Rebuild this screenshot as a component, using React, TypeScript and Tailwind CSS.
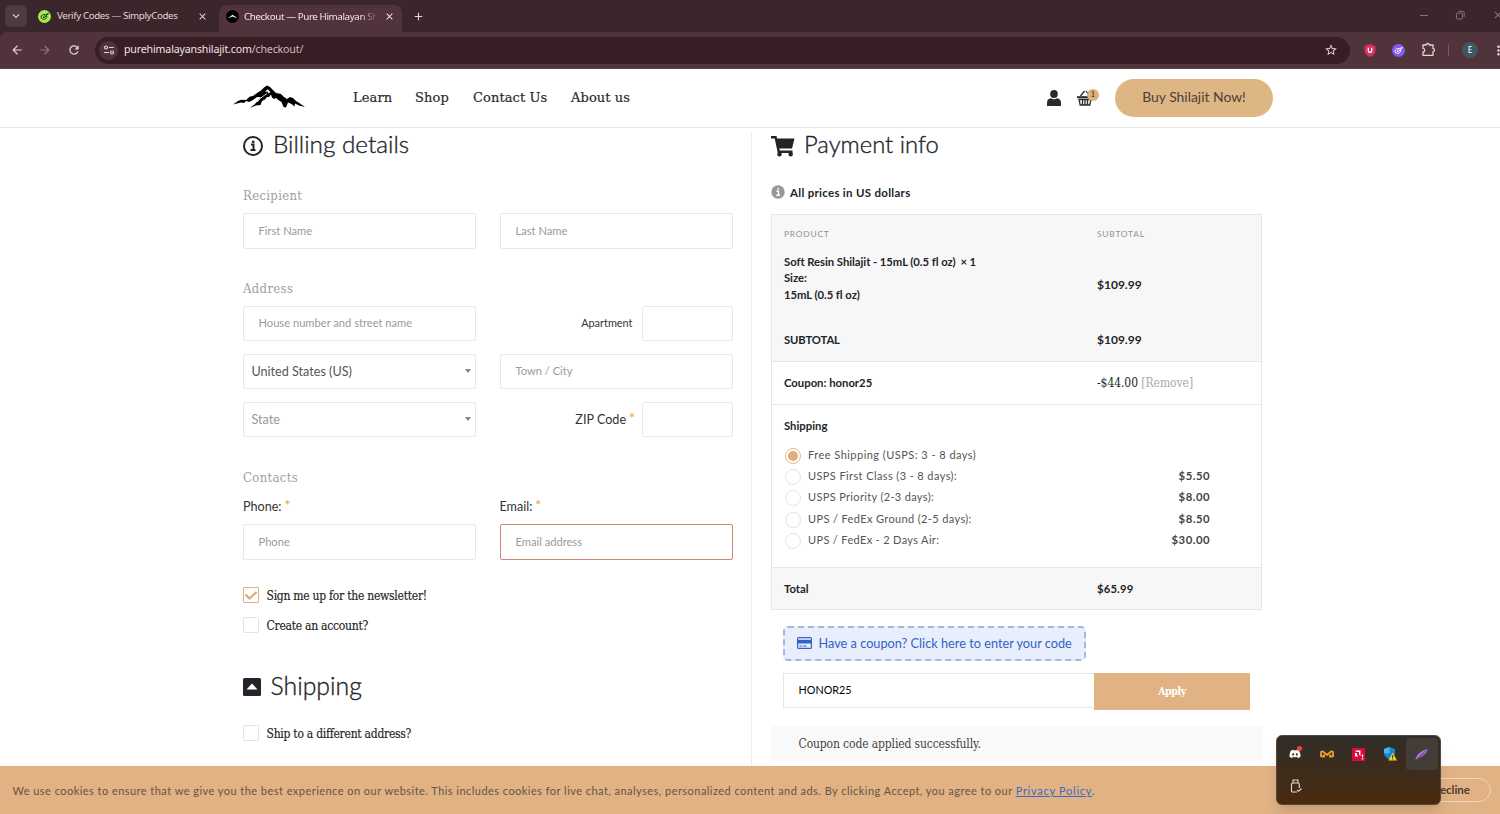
import React from 'react'
import clsx from 'clsx'
import { FaDiscord } from 'react-icons/fa'
import {
  MdArrowBack,
  MdArrowForward,
  MdClose,
  MdAdd,
  MdRefresh,
  MdStarBorder,
  MdKeyboardArrowDown,
  MdMoreVert
} from 'react-icons/md'

const shippingOptions = [
  { label: 'Free Shipping (USPS: 3 - 8 days)', price: '', spacing: 'tracking-[0.47px]' },
  { label: 'USPS First Class (3 - 8 days):', price: '$5.50', spacing: 'tracking-[0.4px]' },
  { label: 'USPS Priority (2-3 days):', price: '$8.00', spacing: 'tracking-[0.34px]' },
  { label: 'UPS / FedEx Ground (2-5 days):', price: '$8.50', spacing: 'tracking-[0.37px]' },
  { label: 'UPS / FedEx - 2 Days Air:', price: '$30.00', spacing: 'tracking-[0.34px]' }
]

const SimplyMark: React.FC<{ className?: string; bg: string; fg: string }> = ({ className, bg, fg }) => (
  <svg viewBox="0 0 14 14" className={className}>
    <circle cx="7" cy="7" r="7" fill={bg} />
    <path
      d="M7.5 4.8C5 4.4 3.2 5.800 3.200 7.600 3.200 9.600 5.500 10.500 7.500 9.800 9 9.200 9.600 8 9.400 6.800M5.700 8.100 6.800 8.200 11 4.300M6 7 8.500 4.800 11.200 3.700"
      fill="none"
      stroke={fg}
      strokeWidth="1"
      strokeLinecap="round"
    />
  </svg>
)

const BrowserChrome: React.FC = () => (
  <div className="h-[69px] shrink-0 bg-[#3a262b] font-['Noto_Sans',sans-serif] text-[#e6d3d6]">
    <div className="flex h-8 items-end">
      <div className="mb-[5px] ml-[5px] flex h-[22px] w-[22px] items-center justify-center rounded-md bg-[#4b3c40]">
        <MdKeyboardArrowDown size={14} />
      </div>
      <div className="ml-[10px] flex h-8 w-[182px] items-center pl-px">
        <SimplyMark className="h-[13px] w-[13px]" bg="#a4ec50" fg="#1c3310" />
        <span className="ml-[6px] whitespace-nowrap pt-px text-[9.8px] tracking-[-0.4px]">Verify Codes — SimplyCodes</span>
        <MdClose size={11} className="ml-auto mr-[11px]" />
      </div>
      <div className="flex h-[27px] w-[183px] items-center rounded-t-lg bg-[#51333c] pb-[4px] pl-[7px] text-[#f5e6e9]">
        <svg viewBox="0 0 13 13" className="h-[13px] w-[13px] shrink-0">
          <circle cx="6.5" cy="6.5" r="6.5" fill="#000" />
          <path d="M1.5 8 4 6.700 6.500 4.800 9 6.500 11.500 8 9 7.600 6.500 6.500 4 7.600z" fill="#fff" />
        </svg>
        <div className="ml-[5px] w-[134px] whitespace-nowrap pt-px text-[9.8px] tracking-[-0.4px] [mask-image:linear-gradient(to_right,black_86%,transparent_100%)]">
          Checkout — Pure Himalayan Sh
        </div>
        <MdClose size={11} className="ml-[6px] shrink-0" />
      </div>
      <MdAdd size={13} className="mb-[9px] ml-[10px]" />
      <div className="mb-[11px] ml-auto flex items-center text-[#8a7378]">
        <div className="mr-[27px] h-px w-2 bg-current" />
        <svg viewBox="0 0 10 10" className="mr-[27px] h-[10px] w-[10px]" fill="none" stroke="currentColor" strokeWidth="1">
          <rect x="1.5" y="3" width="6" height="6" rx="1.2" />
          <path d="M3.5 1.200h4a1.700 1.700 0 0 1 1.700 1.700v4" />
        </svg>
        <MdClose size={12} className="-mr-[4px]" />
      </div>
    </div>
    <div className="flex h-[37px] items-center rounded-tl-md border-b border-[#5b454b] bg-[#51333c]">
      <MdArrowBack size={14} className="ml-[10px]" />
      <MdArrowForward size={14} className="ml-[14px] text-[#8f757c]" />
      <MdRefresh size={14} className="ml-[15px]" />
      <div className="ml-[14px] flex h-[27px] w-[1255px] items-center rounded-full bg-[#371d24] pl-[4px] pr-[12px]">
        <div className="flex h-[19px] w-[19px] items-center justify-center rounded-full bg-[#51333c]">
          <svg viewBox="0 0 12 12" className="h-[12px] w-[12px]" fill="none" stroke="currentColor" strokeWidth="1.2">
            <circle cx="3" cy="3.5" r="1.5" />
            <path d="M6 3.500h5M1 8.500h5" />
            <circle cx="9" cy="8.5" r="1.5" />
          </svg>
        </div>
        <span className="ml-[6px] text-[10.6px] tracking-[-0.15px] text-[#f3e4e7]">
          purehimalayanshilajit.com<span className="text-[#d3bbc1]">/checkout/</span>
        </span>
        <MdStarBorder size={14} className="ml-auto" />
      </div>
      <svg viewBox="0 0 12 13" className="ml-[14px] h-[13px] w-[12px]">
        <path d="M6 0 11.500 2v4.500C11.500 9.500 9 12 6 13 3 12 .5 9.500.5 6.500V2z" fill="#d62f62" />
        <path d="M4.300 3.700v3.100a1.700 1.700 0 0 0 3.400 0V3.700" fill="none" stroke="#fff" strokeWidth="1.3" />
      </svg>
      <SimplyMark className="ml-[16px] h-[13px] w-[13px]" bg="#8359ee" fg="#fff" />
      <svg viewBox="0 0 15 15" className="-mt-[2px] ml-[16px] h-[15px] w-[15px]" fill="none" stroke="currentColor" strokeWidth="1.3">
        <path d="M2 3h3.200a1.500 1.500 0 0 1 3 0H12v3.600a1.500 1.500 0 0 1 0 3V13.300H2V10c2.300-.2 2.300-3.400 0-3.600z" strokeLinejoin="round" />
      </svg>
      <div className="ml-[12px] h-3 w-px bg-[#745860]" />
      <div className="ml-[13px] flex h-4 w-4 items-center justify-center rounded-full bg-[#415760] text-[8.5px] text-white">E</div>
      <MdMoreVert size={15} className="-mr-2 ml-[13px] shrink-0" />
    </div>
  </div>
)

const Mountain: React.FC = () => (
  <svg viewBox="0 0 72 24" className="h-[24px] w-[72px]" fill="#000">
    <path d="M0 19.500 5 16 8 14.700 13 15 17 11.500 20 11 24 8 28 5.500 31 2.500 34 .5 37 2 40 5 43 8 48 9 51 12 54 14 57 12 60 13 63 16 67 18.500 72 22 66 20.500 62 18.500 61.500 21.500 58.500 19 55 17.500 53 22.500 50.500 22 48.500 17 46 15.500 43 13 41 14 39 12.500 38 9.500 36 12 34 12 32 14.500 29 16 27.500 20 23 20.500 17 23 22 19 25 15.500 28 12 24 12 20 15 16 17 13 16 11 18 8 17.500z" />
    <path d="M32 7 34.500 4.200 37.500 7 35.500 8.500 34.500 6.500z" fill="#fff" />
    <path d="m24 17 5-5 5-3.500" stroke="#fff" strokeWidth=".8" fill="none" />
  </svg>
)

const SiteHeader: React.FC = () => (
  <header className="flex h-[59px] shrink-0 items-center border-b border-[#e8e8e8] pl-[233px] text-[#2b2b2b]">
    <div className="-mt-[3px]">
      <Mountain />
    </div>
    <nav className="ml-12 flex font-['DejaVu_Serif',serif] text-[13px] tracking-[0.1px] [-webkit-text-stroke:0.2px]">
      <span className="w-[62px]">Learn</span>
      <span className="w-[58px]">Shop</span>
      <span className="w-[98px] whitespace-nowrap">Contact Us</span>
      <span className="whitespace-nowrap">About us</span>
    </nav>
    <div className="ml-auto flex items-center">
      <svg viewBox="0 0 14 16" className="h-4 w-[14px]" fill="currentColor">
        <ellipse cx="7" cy="4" rx="3.8" ry="4" />
        <path d="M0 16v-3c0-3 1.500-4.500 4-4.700 2 1.200 4 1.200 6 0 2.500.2 4 1.700 4 4.700v3z" />
      </svg>
      <div className="relative ml-4 h-[18px] w-[22px]">
        <svg viewBox="0 0 16 16" className="absolute bottom-px left-0 h-4 w-4" fill="none" stroke="currentColor">
          <path d="M3.500 6 7.500 1M12.500 6 9 1" strokeWidth="1.3" />
          <path d="M0 7.200h16" strokeWidth="2" />
          <path d="M2 9.500h12l-1.200 5.500H3.200z" strokeWidth="1.3" />
          <path d="M5.500 9v6M8 9v6M10.500 9v6" strokeWidth="1.3" />
        </svg>
        <span className="absolute right-0 top-0 flex h-3 w-3 items-center justify-center rounded-full bg-[#deb07e] font-['DejaVu_Serif',serif] text-[8px]">
          1
        </span>
      </div>
      <div className="ml-4 mr-[227px] flex h-[38px] w-[158px] items-center justify-center rounded-full bg-[#deb684] pb-px text-[13.9px] text-[#4b4037]">
        Buy Shilajit Now!
      </div>
    </div>
  </header>
)

const Field: React.FC<{ text?: string; className?: string }> = ({ text, className }) => (
  <div className={clsx('flex items-center rounded-[2px] border pl-[14.5px] text-[11.15px] text-[#9a9a9a]', className)}>{text}</div>
)

const Select: React.FC<{ text: string; className?: string }> = ({ text, className }) => (
  <div className="flex h-[35px] items-center justify-between rounded-[2px] border border-[#e8e8e8] pl-[7.5px] pr-[4px] text-[12.6px]">
    <span className={clsx('pt-[2px]', className)}>{text}</span>
    <span className="mb-[2px] h-0 w-0 border-x-[3.5px] border-t-[4.5px] border-x-transparent border-t-[#858585]" />
  </div>
)

const SectionLabel: React.FC<{ children: string; className?: string }> = ({ children, className }) => (
  <div
    className={clsx(
      "flex h-5 items-center pt-px font-['DejaVu_Serif_Condensed','DejaVu_Serif',serif] text-[13px] tracking-[0.33px] text-[#a0a0a0]",
      className
    )}
  >
    {children}
  </div>
)

const Heading: React.FC<{ icon: React.ReactNode; children: string; className?: string }> = ({ icon, children, className }) => (
  <h2 className={clsx('flex h-9 items-center font-light text-[#212529]', className)}>
    {icon}
    <span className="-mt-[3px] [-webkit-text-stroke:0.35px]">{children}</span>
  </h2>
)

const Check: React.FC<{ label: string; checked?: boolean; className?: string }> = ({ label, checked, className }) => (
  <div className={clsx('flex h-4 items-center', className)}>
    <div
      className={clsx(
        'flex h-4 w-4 items-center justify-center rounded-[1px] border',
        checked ? 'border-[#deb07e]' : 'border-[#e4e4e4]'
      )}
    >
      {checked && (
        <svg viewBox="0 0 14 14" className="h-[14px] w-[14px]" fill="none" stroke="#deab78" strokeWidth="2.3">
          <path d="m1.500 6.500 4 4L12.500 4" />
        </svg>
      )}
    </div>
    <span className="ml-[7.5px] mt-px whitespace-nowrap font-['DejaVu_Serif_Condensed','DejaVu_Serif',serif] text-[12px] tracking-[-0.26px] text-[#212529] [-webkit-text-stroke:0.15px]">
      {label}
    </span>
  </div>
)

const Star: React.FC = () => <span className="-mt-[5px] ml-[3px] text-[14px] font-bold text-[#eeb04c]">*</span>

const BillingColumn: React.FC = () => (
  <section className="w-[490px]">
    <Heading
      className="text-[24.3px]"
      icon={
        <svg viewBox="0 0 20 20" className="mr-[10px] h-5 w-5" fill="none" stroke="currentColor">
          <circle cx="10" cy="10" r="9" strokeWidth="2" />
          <path d="M8 8.600h2.500V14M7.500 14h5" strokeWidth="2" />
          <path d="M10.200 4.700v2.200" strokeWidth="2.5" />
        </svg>
      }
    >
      Billing details
    </Heading>
    <SectionLabel className="mt-[21px]">Recipient</SectionLabel>
    <div className="mt-2 grid grid-cols-2 gap-6">
      <Field text="First Name" className="h-9 border-[#e8e8e8]" />
      <Field text="Last Name" className="h-9 border-[#e8e8e8]" />
    </div>
    <SectionLabel className="mt-[29px]">Address</SectionLabel>
    <div className="mt-2 grid grid-cols-2 gap-x-6 gap-y-[13px]">
      <Field text="House number and street name" className="h-[35px] border-[#e8e8e8]" />
      <div className="flex items-center justify-end text-[10.9px] text-[#333]">
        Apartment
        <Field className="ml-[9.5px] h-[35px] w-[91px] border-[#e8e8e8]" />
      </div>
      <Select text="United States (US)" className="text-[#555]" />
      <Field text="Town / City" className="h-[35px] border-[#e8e8e8]" />
      <Select text="State" className="text-[#999]" />
      <div className="flex items-center justify-end text-[12.6px] text-[#333]">
        <span className="pt-[2px]">ZIP Code</span> <Star />
        <Field className="ml-[7px] h-[35px] w-[91px] border-[#e8e8e8]" />
      </div>
    </div>
    <SectionLabel className="mt-[30px]">Contacts</SectionLabel>
    <div className="mt-[10px] grid grid-cols-2 gap-x-6 text-[12.6px] text-[#333]">
      <div className="flex h-5 items-center">
        <span className="pt-px">Phone:</span> <Star />
      </div>
      <div className="flex h-5 items-center">
        <span className="-ml-[0.5px] pt-px">Email:</span> <Star />
      </div>
      <Field text="Phone" className="mt-[7px] h-9 border-[#e8e8e8]" />
      <Field text="Email address" className="mt-[7px] h-9 border-[#d08679]" />
    </div>
    <Check label="Sign me up for the newsletter!" checked className="mt-[27px]" />
    <Check label="Create an account?" className="mt-[14px]" />
    <Heading
      className="mt-9 text-[24.8px]"
      icon={
        <svg viewBox="0 0 18 18" className="-mt-px mr-[9.5px] h-[18px] w-[18px]">
          <rect width="18" height="18" rx="1.5" fill="currentColor" />
          <path d="M3.500 11.500 9 5.500l5.500 6z" fill="#fff" />
        </svg>
      }
    >
      Shipping
    </Heading>
    <Check label="Ship to a different address?" className="mt-5" />
  </section>
)

const PaymentColumn: React.FC = () => (
  <section className="w-[491px] text-[#212529]">
    <Heading
      className="text-[23.8px]"
      icon={
        <svg viewBox="0 0 24 22" className="-mt-px mr-[9px] h-[22px] w-6" fill="currentColor">
          <path d="M0 1h5.500l.6 2.500H23.500L21 13.500H8.300l.5 2H21.500V18H6.800L3.700 3.500H0z" />
          <circle cx="8.5" cy="19.2" r="2.2" />
          <circle cx="19.7" cy="19.2" r="2.2" />
        </svg>
      }
    >
      Payment info
    </Heading>
    <div className="mt-[19px] flex h-5 items-center text-[11.5px] font-bold tracking-[0.29px]">
      <svg viewBox="0 0 14 14" className="mb-[3px] mr-[5px] h-[14px] w-[14px]">
        <circle cx="7" cy="7" r="6.7" fill="#96989a" />
        <path d="M5.500 6.300h2v4M5.300 10.300h3.700M7.200 3v1.800" fill="none" stroke="#fff" strokeWidth="1.4" />
      </svg>
      All prices in US dollars
    </div>

    <div className="mt-[11px] border border-[#e6e6e6] text-[11.3px] font-bold">
      <div className="bg-[#f7f7f7]">
        <div className="grid h-9 grid-cols-[313px_1fr] items-center pl-3 pt-[2px] text-[8.4px] font-normal tracking-[0.8px] text-[#8f9193]">
          <span>PRODUCT</span>
          <span>SUBTOTAL</span>
        </div>
        <div className="grid h-[68px] grid-cols-[313px_1fr] pl-3">
          <div className="pt-[2.5px] leading-[16.7px] tracking-[-0.05px]">
            <div>
              Soft Resin Shilajit - 15mL (0.5 fl oz) <span className="ml-[2px]">× 1</span>
            </div>
            <div>Size:</div>
            <div>15mL (0.5 fl oz)</div>
          </div>
          <span className="self-center text-[12px]">$109.99</span>
        </div>
        <div className="grid h-[42px] grid-cols-[313px_1fr] items-center pl-3">
          <span className="tracking-[-0.15px]">SUBTOTAL</span>
          <span className="text-[12px]">$109.99</span>
        </div>
      </div>
      <div className="grid h-11 grid-cols-[313px_1fr] items-center border-y border-[#e6e6e6] pl-3">
        <span>Coupon: honor25</span>
        <span className="font-['DejaVu_Serif_Condensed','DejaVu_Serif',serif] text-[12px] font-normal tracking-[-0.06px]">
          -$44.00 <span className="text-[#aaa]">[Remove]</span>
        </span>
      </div>
      <div className="h-[162px] pl-3 pt-[11px]">
        <div className="h-5 leading-5">Shipping</div>
        <div className="mt-[8px] text-[11px] font-normal text-[#555]">
          {shippingOptions.map((option, i) => (
            <div key={option.label} className="flex h-[21.3px] items-center pr-[51px]">
              <span
                className={clsx(
                  'ml-[0.5px] mt-[2px] flex h-4 w-4 items-center justify-center rounded-full border',
                  i === 0 ? 'border-[#e3b98d]' : 'border-[#e4e4e4]'
                )}
              >
                {i === 0 && <span className="h-[10px] w-[10px] rounded-full bg-[#e0ae7c]" />}
              </span>
              <span className={clsx('ml-[7.5px] pt-px', option.spacing)}>{option.label}</span>
              <span className="ml-auto pt-px text-[11.3px] font-bold tracking-[0.5px] text-[#444]">{option.price}</span>
            </div>
          ))}
        </div>
      </div>
      <div className="grid h-[42px] grid-cols-[313px_1fr] items-center border-t border-[#e6e6e6] bg-[#f7f7f7] pl-3 pt-px">
        <span>Total</span>
        <span className="tracking-[0.15px]">$65.99</span>
      </div>
    </div>

    <div className="ml-3 mt-4 flex h-[35px] w-[303px] items-center rounded-[5px] border-2 border-dashed border-[#a3b7e0] bg-[#e8eefb] pl-3 text-[12.7px] text-[#3162c6]">
      <svg viewBox="0 0 15 12" className="-mt-[2px] mr-[6.5px] h-3 w-[15px]">
        <rect x=".6" y=".6" width="13.8" height="10.8" rx="1" fill="none" stroke="currentColor" strokeWidth="1.2" />
        <path d="M0 2.800h15v3.700H0z" fill="currentColor" />
        <path d="M2.500 9h2.500M6 9h3.500" stroke="currentColor" strokeWidth="1.2" />
      </svg>
      <span className="whitespace-nowrap tracking-[0.02px]">Have a coupon? Click here to enter your code</span>
    </div>
    <div className="ml-3 mt-3 flex h-[37px] items-start">
      <div className="flex h-[35px] w-[311px] items-center border border-r-0 border-[#e6e6e6] pb-px pl-[14.5px] text-[10.8px] text-black">
        HONOR25
      </div>
      <div className="flex h-[37px] w-[156px] items-center justify-center rounded-r-[1px] bg-[#e0b284] pt-px font-['DejaVu_Serif_Condensed','DejaVu_Serif',serif] text-[10.5px] font-bold tracking-[-0.4px] text-white">
        Apply
      </div>
    </div>
    <div className="mt-4 flex h-[35px] items-center bg-[#f9f9f9] pl-[27.5px] font-['DejaVu_Serif_Condensed','DejaVu_Serif',serif] text-[12px] tracking-[-0.13px] text-[#444]">
      Coupon code applied successfully.
    </div>
  </section>
)

const CookieBar: React.FC = () => (
  <footer className="flex h-12 shrink-0 items-center justify-between bg-[#e0b284] pl-[12.5px] pr-[9px]">
    <p className="whitespace-nowrap pt-[2px] text-[11px] tracking-[0.46px] text-[#695442]">
      We use cookies to ensure that we give you the best experience on our website. This includes cookies for live chat, analyses,
      personalized content and ads. By clicking Accept, you agree to our{' '}
      <span className="tracking-[0.72px] text-[#3f68c4] underline">Privacy Policy</span>.
    </p>
    <div className="flex h-6 w-[90px] items-center justify-end rounded-full border border-[#f0d6bb] pr-5 text-[11.5px] font-bold text-[#4c3c2e]">
      Decline
    </div>
  </footer>
)

const TrayPopup: React.FC = () => (
  <div className="absolute left-[1276px] top-[735px] grid h-[70px] w-[165px] grid-cols-5 grid-rows-2 rounded-[6px] border border-[#55483c] bg-gradient-to-b from-[#302d28] to-[#4a290c] p-[2px] shadow-lg">
    <div className="flex items-center justify-center pl-px">
      <div className="relative">
        <FaDiscord size={12} className="text-white" />
        <span className="absolute -right-px -top-[2px] h-[5px] w-[5px] rounded-full bg-[#ef4148]" />
      </div>
    </div>
    <div className="flex items-center justify-center">
      <svg viewBox="0 0 14 8" className="h-2 w-[14px]" fill="none" stroke="#eba52f" strokeWidth="1.8">
        <path d="M1 7V2.500Q1 1 3 1.500L7 5 11 1.500Q13 1 13 2.500V7M1.500 6.500H4V4.500M12.500 6.500H10V4.500" />
      </svg>
    </div>
    <div className="flex items-center justify-center">
      <svg viewBox="0 0 13 13" className="h-[13px] w-[13px]">
        <path d="M0 0h13v13H0z" fill="#da0a3a" />
        <path d="M3 2.500h5.500V8L7 6.500V4H4.500zM3 5v3.500h3.500L5 7V5z" fill="#fff" />
        <path d="M10.500 6.500v2.800M10.500 10v1.400" stroke="#fff" strokeWidth="1.3" />
      </svg>
    </div>
    <div className="flex items-center justify-center">
      <svg viewBox="0 0 13 14" className="h-[14px] w-[13px]">
        <path d="M5.500 0 11 2v4c0 3-2.500 5-5.500 6.500C2.500 11 0 9 0 6V2z" fill="#1687d2" />
        <path d="M5.500 0v6.300H0V2z" fill="#43b9ef" />
        <path d="M8.700 5.500 13 13.500H4.400z" fill="#f7cd2b" />
        <path d="M8.700 8v2.800M8.700 11.500v1" stroke="#222" strokeWidth="1" />
      </svg>
    </div>
    <div className="flex items-center justify-center rounded-[3px] bg-[#433c37]">
      <svg viewBox="0 0 13 13" className="-ml-px h-[13px] w-[13px]">
        <path d="M.5 12.500C1 8 3.500 4 12.500.8c-.5 4-3 7.500-9 9.200z" fill="#a678dd" />
        <path d="M1 12 11.500 2M4 8.500 10 5" stroke="#59368a" strokeWidth=".8" />
      </svg>
    </div>
    <div className="flex items-center justify-center pl-[2px]">
      <svg viewBox="0 0 12 14" className="h-[14px] w-3" fill="none" stroke="#e5ddd5" strokeWidth="1.1">
        <path d="M3 4V1h5v3M7 13H2.500Q1.500 13 1.500 12V5.500Q1.500 4 3 4h5q1.300 0 1.300 1.500V9M7 10.800l1.500 1.500L11.500 9.500" />
      </svg>
    </div>
  </div>
)

const App: React.FC = () => {
  return (
    <div className="relative flex h-[814px] w-[1500px] flex-col overflow-hidden bg-white font-['Lato',sans-serif]">
      <BrowserChrome />
      <SiteHeader />
      <main className="flex flex-1 overflow-hidden pl-[243px]">
        <BillingColumn />
        <div className="ml-[18px] mr-[19px] mt-1 w-px bg-[#ececec]" />
        <PaymentColumn />
      </main>
      <CookieBar />
      <TrayPopup />
    </div>
  )
}

export default App
